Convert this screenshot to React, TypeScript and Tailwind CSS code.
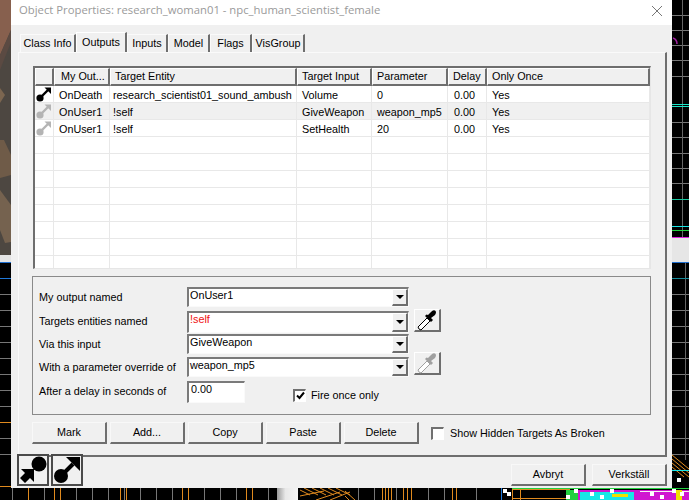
import React from 'react'

const font = "font-['Liberation_Sans',Arial,sans-serif]"

const hLines = [15, 30, 45, 60, 76, 122, 137, 153, 168, 183, 294, 310, 326, 342, 358, 374, 390, 406, 438, 454]
const vLines = [12, 44, 76, 92, 108, 124, 140, 156, 172, 188, 204, 220, 236, 252, 268, 358, 374, 396, 428, 444, 476]
const orange = [28, 54, 60, 120, 126, 182, 188, 246, 252, 382, 385, 388, 391, 403, 407, 411, 452, 456]

const Background = () => (
  <svg className="absolute inset-0" width="689" height="500" viewBox="0 0 689 500">
    <defs>
      <linearGradient id="scroll" x1="0" x2="1" y1="0" y2="0">
        <stop offset="0" stopColor="#9a9a9a" />
        <stop offset="0.4" stopColor="#e8e8e8" />
        <stop offset="1" stopColor="#f4f4f4" />
      </linearGradient>
    </defs>
    <rect width="689" height="500" fill="#000" />
    {hLines.map((y) => (
      <g key={y}>
        <line x1="0" x2="12" y1={y + 0.5} y2={y + 0.5} stroke={y < 255 ? 'none' : '#777'} />
        <line x1="672" x2="689" y1={y + 0.5} y2={y + 0.5} stroke="#777" />
      </g>
    ))}
    <line x1="682.5" x2="682.5" y1="0" y2="237" stroke="#666" />
    <line x1="685.5" x2="685.5" y1="262" y2="460" stroke="#666" />
    {vLines.map((x) => (
      <line key={x} x1={x + 0.5} x2={x + 0.5} y1="488" y2="500" stroke="#777" />
    ))}
    {orange.map((x) => (
      <line key={x} x1={x + 0.5} x2={x + 0.5} y1="488" y2="500" stroke="#e08a1e" />
    ))}
    {/* textured wall at the top left */}
    <rect x="0" y="0" width="12" height="255" fill="#4d4741" />
    <polygon points="0,0 11,0 11,30 0,55" fill="#87604e" />
    <polygon points="0,55 11,30 11,42 0,70" fill="#5b4a42" />
    <polygon points="0,88 5,95 0,103" fill="#7c6650" />
    <polygon points="0,140 4,140 11,155 11,175 0,178" fill="#6f5b48" />
    <polygon points="0,190 11,205 11,242 5,243 0,230" fill="#75624f" />
    <rect x="0" y="255" width="12" height="7" fill="#e4e4e4" />
    <rect x="0" y="262" width="12" height="1" fill="#1f6fd0" />
    <rect x="0" y="278" width="12" height="1" fill="#1f78d8" />
    <rect x="0" y="422" width="12" height="1" fill="#e08a1e" />
    <rect x="0" y="486" width="12" height="1" fill="#e08a1e" />
    {/* right strip */}
    <path d="M673 38c3 1 4 3 4 6" stroke="#a020a0" fill="none" strokeWidth="1.5" />
    <rect x="672" y="104" width="17" height="1" fill="#19e6c8" />
    <rect x="672" y="106" width="17" height="1" fill="#19e6c8" />
    <rect x="672" y="199" width="17" height="1" fill="#19c8a0" />
    <rect x="672" y="226" width="17" height="1" fill="#19e6e6" />
    <rect x="672" y="230" width="17" height="1" fill="#22d040" />
    <rect x="672" y="237" width="17" height="1" fill="#e020e0" />
    <rect x="672" y="238" width="17" height="24" fill="#e6e6e6" />
    <rect x="672" y="262" width="17" height="1" fill="#1f6fd0" />
    <rect x="672" y="278" width="17" height="1" fill="#148a9a" />
    <path d="M672 455l17 14M672 459l17 14M672 463l17 14M672 467l12 10" stroke="#e08a1e" fill="none" />
    <rect x="672" y="470" width="17" height="1" fill="#19e6e6" />
    <rect x="677" y="478" width="4" height="4" fill="#fff" />
    {/* busy part of the map along the bottom */}
    <rect x="277" y="488" width="21" height="12" fill="url(#scroll)" />
    <path d="M300 490l10 5M304 488l14 7M312 488l14 7M320 488l14 7M328 488l14 7M336 488l14 7M300 496l24 -5M316 500l24 -8M330 500l20 -8M345 491l10 9M345 496l4 4" stroke="#e08a1e" fill="none" />
    <rect x="501" y="488" width="1" height="12" fill="#1f78d8" />
    <rect x="512" y="488" width="177" height="1" fill="#22d040" />
    <rect x="512" y="489" width="58" height="1" fill="#e08a1e" />
    <rect x="512" y="489" width="1" height="11" fill="#e08a1e" />
    <rect x="520" y="489" width="1" height="11" fill="#e08a1e" />
    <rect x="512" y="498" width="58" height="1" fill="#e08a1e" />
    <rect x="566" y="490" width="12" height="10" fill="#22d040" />
    <rect x="578" y="490" width="111" height="10" fill="#d016d0" />
    <rect x="580" y="492" width="54" height="8" fill="#19e6e6" />
    <rect x="612" y="494" width="16" height="3" fill="#f0e000" />
    <rect x="640" y="491" width="49" height="1" fill="#f4f4f4" />
    <rect x="676" y="490" width="6" height="10" fill="#f0e000" />
    {[503, 507, 566, 574, 590, 600, 610, 650, 660, 672, 680].map((x, i) => (
      <rect key={x} x={x} y={489 + (i % 3) * 3} width="4" height="4" fill="#fff" />
    ))}
  </svg>
)

const Pin = ({ color = '#000', size = 16 }: { color?: string; size?: number }) => (
  <svg width={size} height={size} viewBox="0 0 16 16">
    <circle cx="4" cy="12" r="3.6" fill={color} />
    <path d="M5 11 L12 4" stroke={color} strokeWidth="2.4" />
    <path d="M8.5 1.5 H15 V8 Z" fill={color} />
  </svg>
)

const Dropper = ({ color }: { color: string }) => (
  <svg width="22" height="22" viewBox="0 0 22 22">
    <path d="M3 20 L2 18 L11 9 L14 12 L5 21 Z" fill="#fff" stroke={color} strokeWidth="1" />
    <path d="M9 7 L15 13 L17 11 L15 9 L19 6 Q21 3 19 1.500 Q17 0.500 15 3 L12 6 L10.500 5.500 Z" fill={color} />
  </svg>
)

const Combo = ({ value, red, h }: { value: string; red?: boolean; h: string }) => (
  <div className={`flex ${h} w-[222px] items-stretch border-t-2 border-l-2 border-t-[#7a7a7a] border-l-[#7a7a7a] border-r border-b border-r-[#fafafa] border-b-[#fafafa] bg-white`}>
    <span className={`flex-1 pl-px leading-[13px] ${red ? 'text-[#f01010]' : 'text-black'}`}>{value}</span>
    <span className="flex w-[16px] items-center justify-center border-r-2 border-b-2 border-r-[#6e6e6e] border-b-[#6e6e6e] border-l border-t border-l-white border-t-white bg-[#f0f0f0]">
      <span className="h-0 w-0 border-x-[4px] border-t-[4px] border-x-transparent border-t-black" />
    </span>
  </div>
)

const Btn = ({ label, w = 'w-[75px]' }: { label: string; w?: string }) => (
  <button className={`flex h-[22px] ${w} items-center justify-center border-t border-l border-t-[#f8f8f8] border-l-[#f8f8f8] border-r-2 border-b-2 border-r-[#6e6e6e] border-b-[#6e6e6e] bg-[#f0f0f0] text-black`}>
    {label}
  </button>
)

const DropBtn = ({ color, className }: { color: string; className?: string }) => (
  <button className={`flex h-[23px] w-[27px] items-center justify-center border-t border-l border-t-white border-l-white border-r-2 border-b-2 border-r-[#6e6e6e] border-b-[#6e6e6e] bg-[#f0f0f0] ${className ?? ''}`}>
    <Dropper color={color} />
  </button>
)

const tabs = [
  { label: 'Class Info', w: 'w-[56px]' },
  { label: 'Outputs', w: 'w-[51px]', active: true },
  { label: 'Inputs', w: 'w-[41px]' },
  { label: 'Model', w: 'w-[42px]' },
  { label: 'Flags', w: 'w-[42px]' },
  { label: 'VisGroup', w: 'w-[53px]' },
]

const cols = 'grid grid-cols-[19px_56px_187px_75px_76px_39px_1fr]'

const rows = [
  { out: 'OnDeath', target: 'research_scientist01_sound_ambush', input: 'Volume', param: '0', on: true },
  { out: 'OnUser1', target: '!self', input: 'GiveWeapon', param: 'weapon_mp5', shaded: true },
  { out: 'OnUser1', target: '!self', input: 'SetHealth', param: '20' },
]

const heads = ['', 'My Out...', 'Target Entity', 'Target Input', 'Parameter', 'Delay', 'Only Once']
const headPad = ['pl-[4px]', 'pl-[6px]', 'pl-[4px]', 'pl-[4px]', 'pl-[4px]', 'pl-[4px]', 'pl-[4px]']
const cellPad = ['pl-[5px]', 'pl-[3px]', 'pl-[5px]', 'pl-[5px]', 'pl-[6px]', 'pl-[5px]']

const EventTable = () => (
  <div className="h-[203px] w-[618px] overflow-hidden border-t-2 border-l-2 border-t-[#6e6e6e] border-l-[#6e6e6e] border-r border-b border-r-[#e6e6e6] border-b-[#e6e6e6] bg-white">
    <div className={cols}>
      {heads.map((h, i) => (
        <div key={h} className={`h-[18px] truncate border-t border-l border-t-white border-l-white border-r-2 border-b-2 border-r-[#6e6e6e] border-b-[#6e6e6e] bg-[#f0f0f0] ${headPad[i]} leading-[15px] text-black`}>
          {h}
        </div>
      ))}
    </div>
    {rows.map((r, i) => (
      <div key={i} className={`${cols} h-[17px] items-start text-black ${r.shaded ? 'bg-[#f0f0f0]' : 'bg-white'} border-b border-b-[#e8e8e8]`}>
        <span className="flex h-[16px] items-center justify-center border-r border-r-[#e8e8e8]">
          <Pin color={r.on ? '#000' : '#b4b4b4'} />
        </span>
        {[r.out, r.target, r.input, r.param, '0.00', 'Yes'].map((v, j) => (
          <span key={j} className={`h-[16px] truncate border-r border-r-[#e8e8e8] ${cellPad[j]} leading-[18px]`}>{v}</span>
        ))}
      </div>
    ))}
    {Array.from({ length: 8 }).map((_, i) => (
      <div key={i} className={`${cols} h-[17px] border-b border-b-[#e8e8e8]`}>
        {heads.map((h) => (
          <span key={h} className="border-r border-r-[#e8e8e8]" />
        ))}
      </div>
    ))}
  </div>
)

const Check = ({ checked }: { checked?: boolean }) => (
  <span className="flex h-[13px] w-[13px] items-center justify-center border-t-2 border-l-2 border-t-[#707070] border-l-[#707070] border-r border-b border-r-white border-b-white bg-white">
    {checked && (
      <svg width="9" height="9" viewBox="0 0 9 9">
        <path d="M1 4.500 L3.500 7 L8 1.500" stroke="#000" strokeWidth="2" fill="none" />
      </svg>
    )}
  </span>
)

const EntityForm = () => (
  <div className="mt-[7px] -ml-px h-[139px] w-[619px] border border-[#8a8a8a] pt-[10px] pl-[6px] whitespace-nowrap">
    <div className="flex h-[24px] items-start">
      <span className="w-[148px] pt-[2px]">My output named</span>
      <Combo value="OnUser1" h="h-[20px]" />
    </div>
    <div className="flex h-[23px] items-start">
      <span className="w-[148px] pt-[2px]">Targets entities named</span>
      <Combo value="!self" red h="h-[22px]" />
      <DropBtn color="#000" className="ml-[5px] -mt-[2px]" />
    </div>
    <div className="flex h-[23px] items-start">
      <span className="w-[148px] pt-[2px]">Via this input</span>
      <Combo value="GiveWeapon" h="h-[20px]" />
    </div>
    <div className="flex h-[24px] items-start">
      <span className="w-[148px] pt-[2px]">With a parameter override of</span>
      <Combo value="weapon_mp5" h="h-[20px]" />
      <DropBtn color="#a0a0a0" className="ml-[5px] -mt-[5px]" />
    </div>
    <div className="flex items-start">
      <span className="w-[148px] pt-[2px]">After a delay in seconds of</span>
      <div className="h-[22px] w-[58px] border-t-2 border-l-2 border-t-[#7a7a7a] border-l-[#7a7a7a] border-r border-b border-r-[#fafafa] border-b-[#fafafa] bg-white pl-[2px] leading-[12px]">0.00</div>
      <label className="mt-[6px] ml-[48px] flex items-center gap-[5px]">
        <Check checked />
        Fire once only
      </label>
    </div>
  </div>
)

const App = () => {
  return (
    <div className={`relative h-[500px] w-[689px] overflow-hidden text-[10.8px] ${font}`}>
      <Background />
      <div className="relative ml-[11px] flex h-[488px] w-[661px] flex-col bg-[#f0f0f0]">
        <div className="flex h-[25px] items-center justify-between bg-white pr-[9px] pb-[4px] pl-[8px]">
          <span className="font-['Open_Sans',sans-serif] text-[11.3px] text-[#9a9a9a]">Object Properties: research_woman01 - npc_human_scientist_female</span>
          <svg width="12" height="12" viewBox="0 0 12 12">
            <path d="M1 1 L11 11 M11 1 L1 11" stroke="#777" strokeWidth="1" />
          </svg>
        </div>

        <div className="mt-[8px] ml-[9px] flex h-[19px] items-end whitespace-nowrap">
          {tabs.map((t) => (
            <div
              key={t.label}
              className={
                t.active
                  ? `relative z-10 flex h-[20px] ${t.w} justify-center border-t border-l border-t-white border-l-white border-r-2 border-r-[#6e6e6e] bg-[#f0f0f0] pt-[2px] leading-[15px]`
                  : `flex h-[18px] ${t.w} justify-center border-t border-l border-t-[#fafafa] border-l-[#fafafa] border-r-2 border-r-[#6e6e6e] pt-[1px] leading-[15px]`
              }
            >
              {t.label}
            </div>
          ))}
        </div>

        <div className="ml-[7px] h-[405px] w-[649px] border-t border-l border-t-[#fafafa] border-l-[#fafafa] border-r-2 border-b-2 border-r-[#6e6e6e] border-b-[#6e6e6e] pt-[13px] pl-[14px]">
          <EventTable />
          <EntityForm />
          <div className="mt-[7px] -ml-px flex items-center gap-[3px]">
            <Btn label="Mark" />
            <Btn label="Add..." />
            <Btn label="Copy" />
            <Btn label="Paste" />
            <Btn label="Delete" />
            <span className="ml-[9px] flex items-center gap-[6px]">
              <Check />
              Show Hidden Targets As Broken
            </span>
          </div>
        </div>

        <div className="-mt-[3px] ml-[6px] flex items-start">
          <button className="flex h-[32px] w-[32px] items-center justify-center border-2 border-[#4a4a4a] bg-[#f0f0f0]">
            <svg width="28" height="28" viewBox="0 0 28 28">
              <circle cx="20" cy="8" r="7.500" fill="#000" />
              <path d="M2 13 H15 V26 L11 22 L6 27 L1 22 L6 17 Z" fill="#000" />
            </svg>
          </button>
          <button className="ml-[2px] flex h-[32px] w-[32px] items-center justify-center border-2 border-[#4a4a4a] bg-[#f0f0f0]">
            <svg width="28" height="28" viewBox="0 0 28 28">
              <circle cx="8" cy="20" r="7" fill="#000" />
              <path d="M10 18 L20 8" stroke="#000" strokeWidth="4" />
              <path d="M13 1 H27 V15 Z" fill="#000" />
            </svg>
          </button>
          <div className="mt-[10px] mr-[5px] ml-auto flex gap-[6px]">
            <Btn label="Avbryt" />
            <Btn label="Verkställ" />
          </div>
        </div>
      </div>
    </div>
  )
}

export default App
